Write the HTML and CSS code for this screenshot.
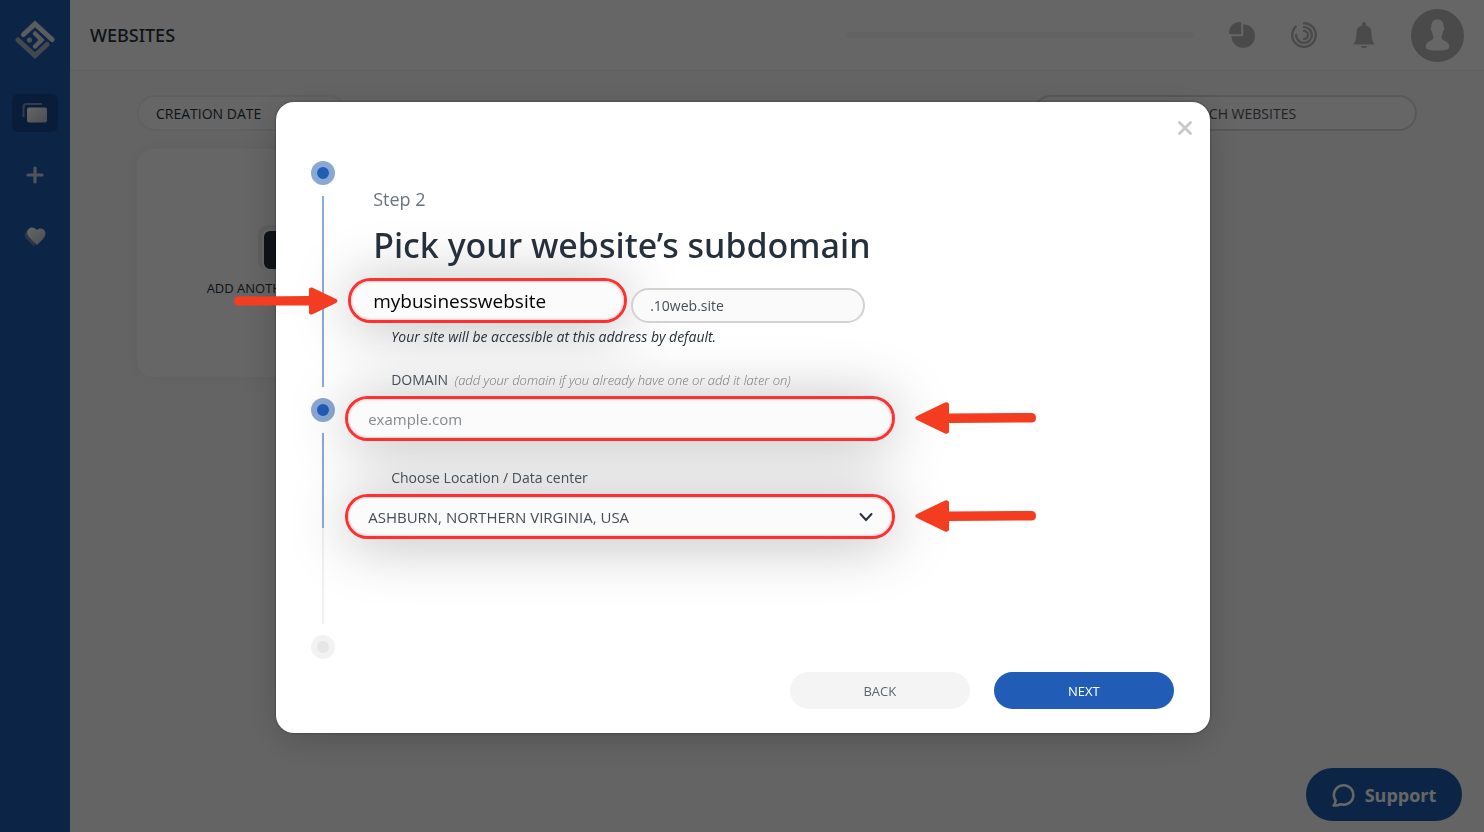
FILE: index.html
```
<!DOCTYPE html>
<html lang="en">
<head>
    <meta charset="UTF-8">
    <meta name="viewport" content="width=device-width, initial-scale=1.0">
    <title>Websites</title>
    <link rel="stylesheet" href="styles.css">
</head>
<body>
    <aside class="sidebar">
        <a href="#" class="logo" aria-label="Home">
            <svg width="40" height="40" viewBox="0 0 40 40" fill="none" stroke-width="5" stroke-linecap="round" stroke-linejoin="miter">
                <defs>
                    <linearGradient id="metal" x1="0" y1="0" x2="1" y2="1">
                        <stop offset="0" stop-color="#fff"/>
                        <stop offset="1" stop-color="#b9c0cc"/>
                    </linearGradient>
                </defs>
                <path d="M8.500 14.500L20 4L37 19.500" stroke="#e6e6e6"/>
                <path d="M3 20L20 35.500L32 24.500" stroke="#a9b4c6"/>
                <path d="M20 13.500L26.500 20L20 26.500" stroke="#dcdfe4" stroke-width="4.500"/>
                <circle cx="14.500" cy="20" r="2.600" fill="#c2cad6"/>
            </svg>
        </a>
        <nav>
            <ul>
                <li><a href="#websites" class="active" aria-label="Websites">
                    <svg width="26" height="20" viewBox="0 0 26 20">
                        <path d="M1.500 14V4Q1.500 1 4.500 1H20" fill="none" stroke="#7f95b8" stroke-width="2"/>
                        <rect x="5" y="4.500" width="20" height="15" rx="2" fill="url(#metal)"/>
                    </svg>
                </a></li>
                <li><a href="#add" aria-label="Add website">
                    <svg width="18" height="18" viewBox="0 0 18 18" stroke="#c9d0dc" stroke-width="3.200" stroke-linecap="round">
                        <path d="M9 2V16M2 9H16"/>
                    </svg>
                </a></li>
                <li><a href="#favorites" aria-label="Favorites">
                    <svg width="22" height="20" viewBox="0 0 22 20">
                        <path d="M10 19.500L2.500 12C-1 8 1.500 2.500 6 2.500L16 6Z" fill="#6f87ae"/>
                        <path d="M13 18L4.500 9.500C1 5 5 -.500 9.500 .800Q12 1.500 13 3C16 .200 20 1.500 21.300 5C22 8 20.500 10 19 12Z" fill="url(#metal)"/>
                    </svg>
                </a></li>
            </ul>
        </nav>
    </aside>

    <div class="main-content">
        <header>
            <h1>WEBSITES</h1>
            <div class="usage-bar"></div>
            <div class="header-icons">
                <svg width="26" height="26" viewBox="0 0 26 26" fill="#b8b8b8">
                    <path d="M1 12.200Q0 12.200 0 11C0 4.500 4.500 0 11 0Q12.200 0 12.200 1V12.200Z"/>
                    <path d="M14.200 2.200A11.800 11.800 0 1 1 2.400 14.300H14.200Z"/>
                </svg>
                <svg width="26" height="26" viewBox="0 0 26 26" fill="none" stroke="#b8b8b8" stroke-width="2.400" stroke-linecap="round">
                    <path d="M13 1.200A11.800 11.800 0 1 1 4.600 4.700"/>
                    <path d="M13 5.100A7.900 7.900 0 1 1 5.100 13"/>
                    <path d="M13 9A4 4 0 0 1 13 17"/>
                </svg>
                <svg width="22" height="26" viewBox="0 0 22 26" fill="#b8b8b8">
                    <path d="M9 3.500V2A2 2 0 0 1 13 2V3.500C17 4.500 18.500 7.500 18.500 11C18.500 17 19.500 19.500 22 22.500H0C2.500 19.500 3.500 17 3.500 11C3.500 7.500 5 4.500 9 3.500Z"/>
                    <path d="M7.500 24H14.500Q13.500 26 11 26Q8.500 26 7.500 24Z"/>
                </svg>
                <svg class="avatar" width="53" height="53" viewBox="0 0 53 53">
                    <circle cx="26.500" cy="26.500" r="26.500" fill="#b8b8b8"/>
                    <path d="M20.500 18C20 13 22.500 10.500 26.500 10.500C30.500 10.500 33 13 32.500 18C34 18.500 33 22 31.800 23C31.500 26 30.500 27 30.500 29C31 32 38 32 38.200 37C38.200 40 37 41.500 26.500 41.500C16 41.500 14.800 40 14.800 37C15 32 22 32 22.500 29C22.500 27 21.500 26 21.200 23C20 22 19 18.500 20.500 18Z" fill="#fff"/>
                </svg>
            </div>
        </header>
        <main>
            <div class="toolbar">
                <button type="button" class="sort-btn">CREATION DATE</button>
                <input type="search" class="search" placeholder="SEARCH WEBSITES" aria-label="Search websites">
            </div>
            <button type="button" class="add-card">
                <span class="add-icon"></span>
                ADD ANOTHER WEBSITE
            </button>
        </main>
    </div>

    <button type="button" class="support">
        <svg width="24" height="24" viewBox="0 0 24 24" fill="none" stroke="#fff" stroke-width="2.600" stroke-linejoin="round">
            <path d="M3.600 17.500A9.700 9.700 0 1 1 8.500 21.200C6 22.600 3.500 22.700 1.600 22.400C3 21 3.700 19.500 3.600 17.500Z"/>
        </svg>
        Support
    </button>

    <div class="overlay">
        <div class="modal" role="dialog" aria-modal="true" aria-labelledby="modalTitle">
            <button type="button" class="close" aria-label="Close">
                <svg width="14" height="14" viewBox="0 0 14 14" stroke="#c6c8ca" stroke-width="2.800" stroke-linecap="round">
                    <path d="M1.500 1.500L12.500 12.500M12.500 1.500L1.500 12.500"/>
                </svg>
            </button>
            <div class="modal-body">
                <div class="stepper">
                    <span class="dot done"></span>
                    <span class="line done"></span>
                    <span class="dot done"></span>
                    <span class="line half"></span>
                    <span class="dot"></span>
                </div>
                <form id="subdomainForm">
                    <p class="step">Step 2</p>
                    <h2 id="modalTitle">Pick your website’s subdomain</h2>
                    <div class="subdomain-row">
                        <div class="field subdomain">
                            <input type="text" id="subdomain" value="mybusinesswebsite" aria-label="Subdomain">
                            <svg class="arrow arrow-right" width="104" height="28" viewBox="0 0 104 28" fill="#f43d20">
                                <path d="M4 9.500L75 9V2Q75.500 0 78 .500L102 12Q105 14 102 16L78 27.500Q75.500 28 75 26V18.500H4Q0 18 0 14Q0 10 4 9.500Z"/>
                            </svg>
                        </div>
                        <input type="text" class="suffix" value=".10web.site" aria-label="Domain suffix" readonly>
                    </div>
                    <p class="hint">Your site will be accessible at this address by default.</p>

                    <label for="domain">DOMAIN <em>(add your domain if you already have one or add it later on)</em></label>
                    <div class="field">
                        <input type="text" id="domain" placeholder="example.com">
                        <svg class="arrow arrow-left" width="121" height="32" viewBox="0 0 121 32" fill="#f43d20">
                            <path d="M117 11L34 11.500V2Q33 -.500 30 .500L2 14Q-1.500 16 2 18L30 31.500Q33 32.500 34 30V21L117 20.500Q121 20 121 16Q121 11.500 117 11Z"/>
                        </svg>
                    </div>

                    <label for="location">Choose Location / Data center</label>
                    <div class="field">
                        <select id="location">
                            <option>ASHBURN, NORTHERN VIRGINIA, USA</option>
                        </select>
                        <svg class="chevron" width="14" height="10" viewBox="0 0 14 10" fill="none" stroke="#26303c" stroke-width="2" stroke-linecap="round">
                            <path d="M1.500 2L7 8L12.500 2"/>
                        </svg>
                        <svg class="arrow arrow-left" width="121" height="32" viewBox="0 0 121 32" fill="#f43d20">
                            <path d="M117 11L34 11.500V2Q33 -.500 30 .500L2 14Q-1.500 16 2 18L30 31.500Q33 32.500 34 30V21L117 20.500Q121 20 121 16Q121 11.500 117 11Z"/>
                        </svg>
                    </div>
                </form>
            </div>
            <div class="modal-footer">
                <button type="button" class="btn">BACK</button>
                <button type="submit" form="subdomainForm" class="btn primary">NEXT</button>
            </div>
        </div>
    </div>
</body>
</html>
```

FILE: styles.css
```
* {
    box-sizing: border-box;
}

body {
    font-family: "Open Sans", "Noto Sans", sans-serif;
    margin: 0;
    min-height: 100vh;
    display: flex;
    background-color: #fbfbfb;
    color: #26303c;
}

button, input, select {
    font-family: inherit;
    color: inherit;
}

button {
    cursor: pointer;
}

svg {
    display: block;
}

.sidebar {
    width: 70px;
    background-color: #205cb2;
    padding-top: 20px;
    display: flex;
    flex-direction: column;
    align-items: center;
}

nav ul {
    list-style-type: none;
    margin: 34px 0 0;
    padding: 0;
    display: flex;
    flex-direction: column;
    gap: 24px;
}

nav ul li a {
    display: flex;
    align-items: center;
    justify-content: center;
    width: 46px;
    height: 38px;
    border-radius: 6px;
}

nav ul li a.active {
    background-color: #184a92;
}

.main-content {
    flex-grow: 1;
}

header {
    display: flex;
    align-items: center;
    height: 71px;
    padding: 0 20px;
    background-color: #fff;
    border-bottom: 1px solid #eee;
}

header h1 {
    margin: 0;
    font-family: "Noto Sans", sans-serif;
    font-size: 18px;
    font-weight: 500;
}

.usage-bar {
    width: 348px;
    height: 6px;
    margin-left: auto;
    border-radius: 3px;
    background-color: #f4f4f4;
}

.header-icons {
    display: flex;
    align-items: center;
    gap: 36px;
    margin-left: 35px;
}

main {
    padding: 24px 67px;
}

.toolbar {
    display: flex;
    justify-content: space-between;
    margin-bottom: 18px;
}

.sort-btn, .search {
    height: 36px;
    border: 2px solid #f0f0f0;
    border-radius: 18px;
    background-color: #fff;
    font-size: 14px;
}

.sort-btn {
    width: 210px;
    padding: 0 17px;
    text-align: left;
}

.search {
    width: 384px;
    padding: 0 0 0 36px;
    border-color: #dcdcdc;
    text-align: center;
    outline: none;
}

.search::placeholder {
    color: #4c545e;
}

.add-card {
    display: flex;
    flex-direction: column;
    align-items: center;
    justify-content: center;
    gap: 8px;
    width: 286px;
    height: 228px;
    border: none;
    border-radius: 16px;
    background-color: #fff;
    box-shadow: 0 0 20px rgba(0,0,0,0.06);
    font-size: 13px;
}

.add-icon {
    width: 36px;
    height: 42px;
    border: 2px solid #fff;
    border-radius: 8px;
    background-color: #26303c;
    box-shadow: -2px -2px 0 2px #ececec;
}

.support {
    position: fixed;
    right: 22px;
    bottom: 11px;
    display: flex;
    align-items: center;
    justify-content: center;
    gap: 9px;
    width: 156px;
    height: 53px;
    border: none;
    border-radius: 27px;
    background-color: #205cb2;
    color: #fff;
    font-size: 18px;
    font-weight: 700;
}

.overlay {
    position: fixed;
    inset: 0;
    display: flex;
    align-items: center;
    justify-content: center;
    padding: 3px 0 0 2px;
    background-color: rgba(0,0,0,0.6);
}

.modal {
    position: relative;
    width: 63%;
    padding: 59px 36px 24px 35px;
    border-radius: 18px;
    background-color: #fff;
    box-shadow: 0 8px 40px rgba(0,0,0,0.2), 0 0 3px rgba(0,0,0,0.4);
}

.close {
    position: absolute;
    top: 19px;
    right: 18px;
    padding: 0;
    border: none;
    background: none;
}

.modal-body {
    display: flex;
    gap: 10px;
}

.stepper {
    display: flex;
    flex-direction: column;
    align-items: center;
    gap: 11px;
    width: 24px;
}

.dot {
    width: 24px;
    height: 24px;
    border: 6px solid #f2f2f2;
    border-radius: 50%;
    background-color: #e6e6e6;
}

.dot.done {
    border-color: #8aa8d4;
    background-color: #215db7;
}

.line {
    width: 2px;
    height: 191px;
    background-color: #f0f0f0;
}

.line.done {
    background-color: #8aabdb;
}

.line.half {
    background: linear-gradient(#8aabdb 50%, #f0f0f0 50%);
}

form {
    width: 550px;
    padding-top: 24px;
}

.step {
    margin: 0 0 0 28px;
    font-size: 18px;
    line-height: 28px;
    color: #6c747c;
}

form h2 {
    margin: 8px 0 9px 28px;
    font-family: "Noto Sans", sans-serif;
    font-size: 34px;
    font-weight: 500;
    line-height: 48px;
    white-space: nowrap;
}

.subdomain-row {
    display: flex;
    align-items: flex-end;
    gap: 4px;
    padding-left: 3px;
}

.field {
    position: relative;
    height: 45px;
    border: 3px solid #ff3030;
    border-radius: 23px;
    background-color: #fbfbfb;
    box-shadow: 0 4px 60px rgba(0,0,0,0.28);
}

.field input, .field select {
    width: 100%;
    height: 100%;
    padding: 0 20px;
    border: none;
    border-radius: 20px;
    background: none;
    box-shadow: inset 0 0 2px 1px #ccd2d4;
    font-size: 15px;
    outline: none;
    appearance: none;
}

.field select {
    color: #454d56;
}

.field.subdomain {
    width: 279px;
}

.field.subdomain input {
    padding: 0 22px;
    font-size: 19px;
    color: #000;
}

.field input::placeholder {
    color: #858a8e;
}

.suffix {
    width: 234px;
    height: 35px;
    padding: 0 17px;
    border: 2px solid #d2d2d2;
    border-radius: 18px;
    background-color: #fafafa;
    font-size: 14px;
    color: #454d56;
}

/* keep the texts above the wide field shadows */
.step, form h2, .hint, form label, .suffix {
    position: relative;
    z-index: 1;
}

.hint {
    margin: 4px 0 22px 46px;
    font-size: 14px;
    font-style: italic;
    line-height: 20px;
}

form label {
    display: block;
    margin: 0 0 5px 46px;
    font-size: 14px;
    line-height: 22px;
    color: #454d56;
}

form label em {
    margin-left: 3px;
    font-size: 13px;
    font-weight: 300;
    color: #777;
}

.field + label {
    margin-top: 26px;
}

.chevron {
    position: absolute;
    right: 19px;
    top: 15px;
    pointer-events: none;
}

.arrow {
    position: absolute;
    pointer-events: none;
}

.arrow-right {
    right: calc(100% + 13px);
    top: 6px;
}

.arrow-left {
    left: calc(100% + 23px);
    top: 3px;
}

.modal-footer {
    display: flex;
    justify-content: flex-end;
    gap: 24px;
    margin-top: 13px;
}

.btn {
    width: 180px;
    height: 37px;
    border: none;
    border-radius: 19px;
    background-color: #f4f4f4;
    font-size: 13px;
    color: #5c646c;
}

.btn.primary {
    background-color: #215db7;
    color: #fff;
}
```
